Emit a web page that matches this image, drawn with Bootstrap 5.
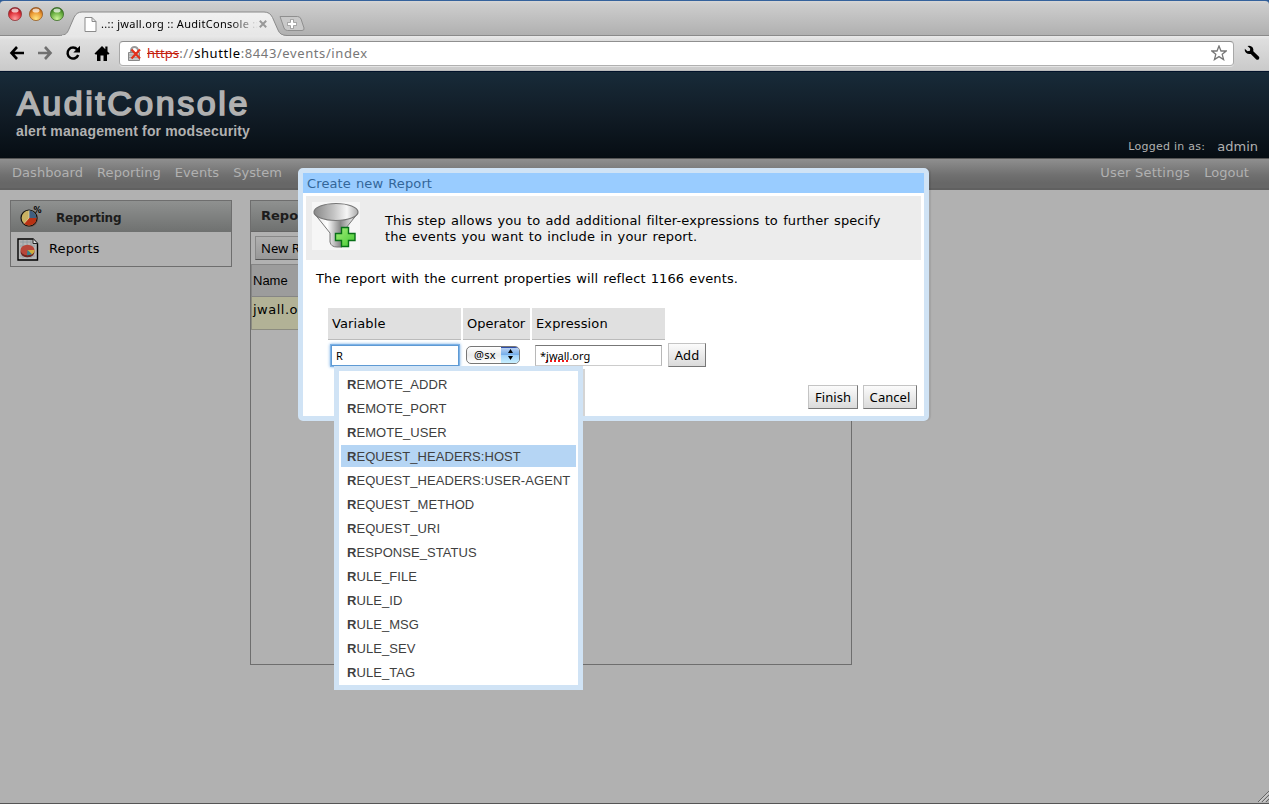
<!DOCTYPE html>
<html lang="en">
<head>
<meta charset="utf-8">
<title>..:: jwall.org :: AuditConsole</title>
<link href="https://cdn.jsdelivr.net/npm/bootstrap@5.3.0/dist/css/bootstrap.min.css" rel="stylesheet">
<style>
  html, body { height: 100%; }
  body { font: 13px/16px "DejaVu Sans", Verdana, sans-serif; color: #000; background: #b1b1b1; overflow: hidden; }
  svg { display: block; flex: none; }
  .ui-font { font-family: "Noto Sans", "Lucida Grande", sans-serif; }

  /* browser window */
  .win { height: 804px; background: #b1b1b1; border-bottom: 1px solid #555; }
  .titlebar { height: 36px; background: linear-gradient(#d6d6d6 0, #cdcdcd 3px, #b0b0b0 34px); border-top: 1px solid #35629c; border-bottom: 1px solid #8a8a8a; border-radius: 4px 4px 0 0; }
  .desk { background: #2c5a94; }
  .lights { padding: 5px 0 0 7px; gap: 5px; width: 61px; }
  .tab-item { width: 229px; height: 35px; margin-left: -3px; margin-bottom: -1px; position: relative; z-index: 1; }
  .tab-shape { position: absolute; inset: 0; }
  .tab-body { position: relative; height: 28px; margin-top: 9px; padding-left: 26px; }
  .tab-label { font-size: 11px; letter-spacing: .3px; width: 157px; margin-left: 4px; overflow: hidden; white-space: nowrap; -webkit-mask-image: linear-gradient(90deg, #000 130px, transparent 157px); mask-image: linear-gradient(90deg, #000 130px, transparent 157px); }
  .toolbar { height: 35px; background: linear-gradient(#e9e9e9, #dedede 4px, #cbcbcb 33px); border-bottom: 1px solid #bcbcbc; padding: 0 9px 0 9px; }
  .address { height: 25px; border: 1px solid; border-color: #8f8f8f #a8a8a8 #b0b0b0; border-radius: 4px; background: #fff; color: #777; font-size: 13px; letter-spacing: .6px; padding: 0 6px 0 7px; margin-left: 9px; box-shadow: 0 1px 0 #e4e4e4; }
  .bad { color: #c5200d; text-decoration: line-through; text-decoration-thickness: 1px; letter-spacing: .1px; }
  .host { color: #000; }

  /* application header */
  .masthead { height: 87px; background: linear-gradient(#182b39, #111c26 50%, #060d13); border-top: 1px solid #02122a; color: #b1b1b1; padding: 0 11px 0 16px; }
  .brand { font: 34px/36px "Liberation Sans", Arial, sans-serif; letter-spacing: 2.55px; -webkit-text-stroke: 1.7px #b1b1b1; stroke-linejoin: round; margin: 13px 0 0 1px; }
  .tagline { font: bold 14px/16px "Liberation Sans", Arial, sans-serif; letter-spacing: .14px; margin-top: 2px; }
  .who { padding-bottom: 3px; gap: 12px; }
  .who-label { font-size: 11px; letter-spacing: .26px; }
  .menubar { height: 32px; background: linear-gradient(#8f8f8f, #707070 16px, #676767 24px); border-top: 1px solid #555; border-bottom: 2px solid #606060; color: #b1b1b1; padding: 0 20px 1px 12px; gap: 14px; }
  .menubar span { letter-spacing: .06px; }

  /* panels */
  .side { width: 222px; border: 1px solid #6e6e6e; height: 67px; }
  .panel-head { background: linear-gradient(#8f9190, #6f7170); font-weight: bold; color: #1c1c1c; }
  .side .panel-head { height: 31px; font-size: 12px; letter-spacing: -.2px; padding-left: 9px; }
  .report { width: 602px; height: 465px; border: 1px solid #6e6e6e; margin-left: 18px; }
  .report .panel-head { height: 31px; padding: 0 10px 2px; border-bottom: 1px solid #666; }
  .aqua-btn { display: inline-flex; align-items: center; justify-content: center; height: 24px; font-size: 13px; color: #000; background: linear-gradient(#fbfbfb, #dadada); border: 1px solid; border-color: #c4c4c4 #777 #777 #c4c4c4; letter-spacing: .05px; }
  .dim { background: linear-gradient(#b0b0b0, #989898); border-color: #888 #555 #555 #888; padding-left: 5px; justify-content: start; }
  .col-head { height: 33px; margin-top: 4px; background: #9c9c9c; border: 1px solid #858585; font-family: "Liberation Sans", Arial, sans-serif; padding-left: 1px; }
  .row-hit { height: 33px; background: #b2b296; border: 1px solid #8c8c80; border-top: 0; padding: 5px 0 0 1px; letter-spacing: .5px; }

  /* dialog */
  .dlg { position: absolute; left: 298px; top: 168px; width: 631px; height: 253px; border: 5px solid #d0e3f5; border-radius: 5px; background: #fff; letter-spacing: .12px; word-spacing: .8px; box-shadow: 2px 0 1px rgba(0,0,0,.08); }
  .dlg-title { height: 20px; background: #9cf; color: #369; padding: 2px 0 0 4px; }
  .dlg-note { margin: 3px; height: 64px; background: #ececec; padding: 6px; }
  .dlg-note p { margin: 1px 0 0 25px; letter-spacing: .11px; word-spacing: 1px; }
  .grid-head { gap: 2px; margin: 21px 0 0 25px; letter-spacing: .12px; }
  .grid-head div { height: 32px; background: #e0e0e0; border-bottom: 1px solid #bbb; padding: 0 4px; }
  .grid-line { margin: 3px 0 0 28px; height: 24px; }
  .field { font-size: 11px; height: 21px; background: #fff; border: 1px solid; border-color: #777 #b8b8b8 #ccc; padding-left: 4px; letter-spacing: 0; margin-top: 1px; }
  .field.on { border-color: #5e9ad4; box-shadow: 0 0 0 1px #7fb3e6, 0 0 3px 1px #79b0e6; }
  .spell { text-decoration: underline dotted #f01818 2px; text-underline-offset: 1px; text-decoration-skip-ink: none; }
  .pick { width: 54px; height: 18px; margin: 0 15px 1px 7px; border: 1px solid #777; border-radius: 5px; font-size: 11px; background: linear-gradient(#fff, #eaeaea 50%, #fff); overflow: hidden; padding-left: 7px; letter-spacing: .3px; }
  .knob { width: 18px; height: 100%; background: linear-gradient(#c3d6f4, #75aeea 48%, #9fd0fa 52%, #c8f0ff); box-shadow: inset 0 1px 0 #2f4ea8; }
  .dlg-foot { gap: 5px; padding-right: 7px; margin-top: 18px; }

  /* autocomplete */
  .suggest { position: absolute; left: 334px; top: 366px; width: 249px; height: 324px; border: 5px solid #d0e3f5; background: #fff; padding: 2px 2px 0; font: 13px/24px "Liberation Sans", Arial, sans-serif; letter-spacing: .06px; color: #3f3f3f; margin: 0; list-style: none; }
  .suggest-shade { position: absolute; left: 583px; top: 369px; width: 2px; height: 47px; background: #d4d4d4; }
  .suggest li { height: 22px; margin-bottom: 2px; padding-left: 6px; white-space: nowrap; }
  .suggest .hit { background: #b5d5f4; }
  .grip { position: absolute; right: 0; bottom: 1px; }
</style>
<script src="https://cdn.jsdelivr.net/npm/bootstrap@5.3.0/dist/js/bootstrap.bundle.min.js"></script>
</head>
<body>
<div class="win position-relative">
  <div class="desk">
  <div class="titlebar d-flex">
    <div class="lights d-flex">
      <svg width="16" height="16" viewBox="0 0 16 16"><defs>
        <radialGradient id="r" cx=".5" cy=".85" r=".8"><stop offset="0" stop-color="#ff9c9c"/><stop offset=".6" stop-color="#e0343c"/><stop offset="1" stop-color="#8e1018"/></radialGradient>
        <radialGradient id="y" cx=".5" cy=".85" r=".8"><stop offset="0" stop-color="#ffe680"/><stop offset=".6" stop-color="#eb9a35"/><stop offset="1" stop-color="#a5500c"/></radialGradient>
        <radialGradient id="g" cx=".5" cy=".85" r=".8"><stop offset="0" stop-color="#cdf59a"/><stop offset=".6" stop-color="#6cb043"/><stop offset="1" stop-color="#2c6a18"/></radialGradient></defs>
        <circle cx="8" cy="8" r="6.6" fill="url(#r)" stroke="#8d3b3f" stroke-width=".8"/><ellipse cx="8" cy="4.4" rx="3.5" ry="2" fill="#fff" opacity=".7"/></svg>
      <svg width="16" height="16" viewBox="0 0 16 16"><circle cx="8" cy="8" r="6.6" fill="url(#y)" stroke="#96602c" stroke-width=".8"/><ellipse cx="8" cy="4.4" rx="3.5" ry="2" fill="#fff" opacity=".7"/></svg>
      <svg width="16" height="16" viewBox="0 0 16 16"><circle cx="8" cy="8" r="6.6" fill="url(#g)" stroke="#41702d" stroke-width=".8"/><ellipse cx="8" cy="4.4" rx="3.5" ry="2" fill="#fff" opacity=".7"/></svg>
    </div>
    <div class="tab-item ui-font">
      <svg class="tab-shape" width="229" height="35" viewBox="0 0 229 35"><defs><linearGradient id="tb" x2="0" y2="1"><stop offset="0" stop-color="#f1f1f1"/><stop offset="1" stop-color="#e6e6e6"/></linearGradient></defs>
        <path d="M0 34.500C7 34.500 9 33 11 28L16 16.500Q18.500 11 24 11H206Q212 11 214.500 16.500L220 29Q222 34.500 229 34.500V36H0Z" fill="url(#tb)" stroke="#8a8a8a"/><path d="M4 35H225" stroke="#e8e8e8" stroke-width="1.500"/></svg>
      <div class="tab-body d-flex align-items-center">
        <svg width="13" height="15" viewBox="0 0 13 15"><path d="M1 .5H8L12 4.500V14.500H1ZM8 .5V4.500H12" fill="#fff" stroke="#8b8b8b"/></svg>
        <span class="tab-label">..:: jwall.org :: AuditConsole ::</span>
        <svg class="ms-0" width="9" height="8" viewBox="-1 0 9 8"><path d="M.8.8 7.200 7.200M7.200.8.8 7.200" stroke="#999" stroke-width="2"/></svg>
      </div>
    </div>
    <svg width="26" height="17" viewBox="0 0 26 17" style="margin:14px 0 0 -8px"><path d="M1 1.500H18.500Q21 1.500 22 4L25 13Q25.500 15.500 23 15.500H8.500Q6 15.500 5 13Z" fill="#c9c9c9" stroke="#8f8f8f"/><path d="M13 4.500V13.500M8.500 9H17.500" stroke="#8a8a8a" stroke-width="4"/><path d="M13 5V13M9 9H17" stroke="#fff" stroke-width="2.400"/></svg>
  </div>
  </div>
  <div class="toolbar d-flex align-items-center">
    <svg width="16" height="16" viewBox="0 0 16 16"><path d="M8 2 2.500 8 8 14M2.500 8H15" fill="none" stroke="#000" stroke-width="2.600"/></svg>
    <svg width="16" height="16" viewBox="0 0 16 16" style="margin-left:12px"><path d="M8 2 13.500 8 8 14M13.500 8H1" fill="none" stroke="#707070" stroke-width="2.600"/></svg>
    <svg width="16" height="16" viewBox="0 0 16 16" style="margin-left:12px"><path d="M12.300 4.500A5.500 5.500 0 1 0 13.200 10" fill="none" stroke="#000" stroke-width="2.500"/><path d="M15 .8V7.500H8.300Z"/></svg>
    <svg width="16" height="17" viewBox="0 0 16 17" style="margin-left:13px"><path d="M8 1 .5 8.500 1.500 9.500H3V16H6.500V10.500H9.500V16H13V9.500H14.500L15.500 8.500 13.500 6.500V1.500H11.300V4.300Z"/></svg>
    <div class="address ui-font d-flex flex-grow-1 align-items-center">
      <svg width="16" height="17" viewBox="0 0 16 17"><path d="M4 8V5.500a3.500 3.500 0 0 1 7 0V8" fill="none" stroke="#999" stroke-width="2"/><path d="M1.500 7.500H12.500V15.500H1.500Z" fill="#c6c6c6" stroke="#888"/><path d="M2 10H12M2 12.500H12" stroke="#a2a2a2"/><path d="M4.500 4.500 13 13.500M13 4.500 4.500 13.500" stroke="#e3301a" stroke-width="2.200"/></svg>
      <span class="flex-grow-1" style="margin-left:4px"><span class="bad">https</span>://<span class="host">shuttle</span>:8443/events/index</span>
      <svg width="16" height="16" viewBox="0 0 16 16"><path d="M8 1 10 6H15.200L11.200 9.300 12.600 14.600 8 11.600 3.400 14.600 4.800 9.300.8 6H6Z" fill="#fff" stroke="#777" stroke-width="1.300"/></svg>
    </div>
    <svg width="16" height="16" viewBox="0 0 16 16" style="margin-left:10px"><path d="M3.500 1Q6.500 0 8.500 2.200 9.800 4 9.300 6.200L15 11.800Q15.800 13 14.800 14.200 13.500 15.300 12.300 14.400L6.800 8.900Q4 9.500 2 7.800.3 6 .8 3.800L3.500 6.200 6 5.800 6.200 3.500Z"/></svg>
  </div>

  <header class="masthead d-flex justify-content-between">
    <div>
      <h1 class="brand">AuditConsole</h1>
      <div class="tagline">alert management for modsecurity</div>
    </div>
    <div class="who d-flex align-items-end"><span class="who-label">Logged in as:</span><span>admin</span></div>
  </header>
  <nav class="menubar d-flex align-items-center">
    <span>Dashboard</span><span>Reporting</span><span>Events</span><span>System</span>
    <span class="ms-auto" style="letter-spacing:.22px">User Settings</span><span>Logout</span>
  </nav>

  <main class="d-flex align-items-start" style="padding:10px 0 0 10px">
    <aside class="side">
      <div class="panel-head d-flex align-items-center">
        <svg width="26" height="24" viewBox="0 0 26 24"><circle cx="10" cy="14" r="8" fill="#7c2a17" opacity=".35"/><circle cx="9" cy="13" r="8" fill="#c9b262" stroke="#111" stroke-width="1.200"/><path d="M9 13V5.500A7.500 7.500 0 0 1 16.500 13Z" fill="#3f5f80"/><path d="M9 13H16.500A7.500 7.500 0 0 1 4 18.600Z" fill="#b93214"/><path d="M9 5.500V13L4 18.600" stroke="#e8dcb0" stroke-width=".7" fill="none"/><text x="13.500" y="7.500" font-size="8" font-family="DejaVu Sans" font-weight="bold">%</text></svg>
        <span style="margin:2px 0 0 10px">Reporting</span>
      </div>
      <div class="d-flex align-items-center" style="padding:6px 0 0 6px">
        <svg width="22" height="23" viewBox="0 0 22 23"><path d="M1 1H16L20.500 5.500V22H1Z" fill="#b5b5b5" stroke="#000" stroke-width="1.400"/><path d="M3 4H14M3 8H18M3 18H18M6 2V20M10 2V20M14 2V20" stroke="#8e9aa0" stroke-width=".8"/><path d="M16 1V5.500H20.500" fill="#ddd" stroke="#222"/><ellipse cx="10.500" cy="14" rx="7" ry="5.200" fill="#6d2620"/><ellipse cx="10.500" cy="12" rx="7" ry="5.200" fill="#b8473a"/><path d="M10.500 12 17.500 12Q17.500 15 14.500 16.500Z" fill="#d0ad3c"/><path d="M10.500 12 15 16.300 10 17.300Z" fill="#318590"/></svg>
        <span style="margin:-2px 0 0 10px;letter-spacing:.1px">Reports</span>
      </div>
    </aside>
    <section class="report">
      <div class="panel-head d-flex align-items-center"><span style="margin-top:1px">Reports</span></div>
      <div style="padding:4px 0 0 4px;height:28px"><span class="aqua-btn ui-font dim" style="width:82px">New Report</span></div>
      <div class="col-head d-flex align-items-center">Name</div>
      <div class="row-hit">jwall.org</div>
    </section>
  </main>

  <div class="dlg">
    <div class="dlg-title d-flex align-items-center">Create new Report</div>
    <div class="dlg-note d-flex align-items-center">
      <svg width="48" height="48" viewBox="0 0 48 48" style="align-self:flex-start"><defs><linearGradient id="f1"><stop offset="0" stop-color="#ddd"/><stop offset=".3" stop-color="#fff"/><stop offset=".6" stop-color="#888"/><stop offset=".85" stop-color="#ddd"/><stop offset="1" stop-color="#888"/></linearGradient><linearGradient id="f2"><stop offset="0" stop-color="#888"/><stop offset=".45" stop-color="#c4c4c4"/><stop offset=".75" stop-color="#f6f6f6"/><stop offset="1" stop-color="#aaa"/></linearGradient><linearGradient id="f3" x2="1" y2="1"><stop offset="0" stop-color="#a6f07a"/><stop offset="1" stop-color="#42c832"/></linearGradient></defs>
        <path d="M0 0H48V48H0Z" fill="#f6f6f6"/>
        <path d="M2 11 18 31V40Q19 45 25 45H30V31L46 11Z" fill="url(#f1)" stroke="#777" stroke-width="1"/><ellipse cx="24" cy="10" rx="22" ry="8.500" fill="url(#f2)" stroke="#777" stroke-width="1.200"/>
        <path d="M29.500 25.500H36.500V31.500H43V38.500H36.500V44.500H29.500V38.500H23.500V31.500H29.500Z" fill="url(#f3)" stroke="#087018" stroke-width="1.400"/></svg>
      <p>This step allows you to add additional filter-expressions to further specify<br>the events you want to include in your report.</p>
    </div>
    <div style="margin:11px 0 0 13px">The report with the current properties will reflect 1166 events.</div>
    <div class="grid-head d-flex">
      <div class="d-flex align-items-center" style="width:133px">Variable</div>
      <div class="d-flex align-items-center" style="width:67px;letter-spacing:0">Operator</div>
      <div class="d-flex align-items-center" style="width:133px">Expression</div>
    </div>
    <div class="grid-line d-flex align-items-center ui-font">
      <div class="field on d-flex align-items-center" style="width:128px">R</div>
      <div class="pick d-flex align-items-center justify-content-between">@sx
        <span class="knob d-flex align-items-center justify-content-center"><svg width="7" height="11" viewBox="0 0 7 11"><path d="M3.500 0 6 4H1ZM3.500 11 6 7H1Z"/></svg></span></div>
      <div class="field d-flex align-items-center" style="width:127px"><span>*<span class="spell">jwall</span>.org</span></div>
      <span class="aqua-btn" style="width:38px;margin-left:6px">Add</span>
    </div>
    <div class="dlg-foot d-flex justify-content-end ui-font">
      <span class="aqua-btn" style="width:50px">Finish</span>
      <span class="aqua-btn" style="width:54px">Cancel</span>
    </div>
  </div>

  <div class="suggest-shade"></div>
  <ul class="suggest">
    <li><b>R</b>EMOTE_ADDR</li><li><b>R</b>EMOTE_PORT</li><li><b>R</b>EMOTE_USER</li>
    <li class="hit"><b>R</b>EQUEST_HEADERS:HOST</li><li><b>R</b>EQUEST_HEADERS:USER-AGENT</li>
    <li><b>R</b>EQUEST_METHOD</li><li><b>R</b>EQUEST_URI</li><li><b>R</b>ESPONSE_STATUS</li>
    <li><b>R</b>ULE_FILE</li><li><b>R</b>ULE_ID</li><li><b>R</b>ULE_MSG</li><li><b>R</b>ULE_SEV</li><li><b>R</b>ULE_TAG</li>
  </ul>
  <svg class="grip" width="12" height="12" viewBox="0 0 12 12"><path d="M1 12 12 1M5 12 12 5M9 12 12 9" stroke="#666"/><path d="M2.500 12 12 2.500M6.500 12 12 6.500" stroke="#ddd"/></svg>
</div>
</body>
</html>
